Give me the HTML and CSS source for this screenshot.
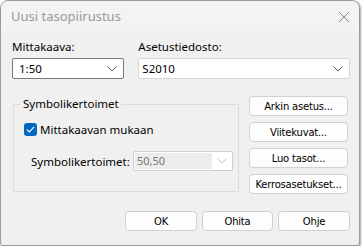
FILE: index.html
```html
<!DOCTYPE html>
<html lang="fi">
<head>
  <meta charset="utf-8">
  <title>Uusi tasopiirustus</title>
  <link rel="stylesheet" href="styles.css">
</head>
<body>
  <div class="window">
    <div class="titlebar">
      <span class="title">Uusi tasopiirustus</span>
      <svg class="close" width="12" height="12" viewBox="0 0 12 12"><path d="M1 1L11 11M11 1L1 11" stroke="#8a8a8a" stroke-width="1"/></svg>
    </div>

    <div class="content">
      <!-- Top combos -->
      <div class="top-row">
        <div class="field scale">
          <label>Mittakaava:</label>
          <div class="combo dark">
            <span>1:50</span>
            <svg class="arrow" width="10" height="6" viewBox="0 0 10 6"><path d="M0.5 0.5L5 5L9.5 0.5" fill="none" stroke="#5a5a5a"/></svg>
          </div>
        </div>
        <div class="field settings">
          <label>Asetustiedosto:</label>
          <div class="combo">
            <span>S2010</span>
            <svg class="arrow" width="10" height="6" viewBox="0 0 10 6"><path d="M0.5 0.5L5 5L9.5 0.5" fill="none" stroke="#5a5a5a"/></svg>
          </div>
        </div>
      </div>

      <!-- Group and side buttons -->
      <div class="mid-row">
        <fieldset class="group">
          <legend>Symbolikertoimet</legend>
          <div class="check-row">
            <span class="checkbox"><svg width="9" height="7" viewBox="0 0 9 7"><path d="M0.8 3.6L3.3 6L8.2 0.8" fill="none" stroke="#fff" stroke-width="1.2"/></svg></span>
            <span>Mittakaavan mukaan</span>
          </div>
          <div class="factor-row">
            <span>Symbolikertoimet:</span>
            <div class="combo disabled">
              <span class="value">50,50</span>
              <svg class="arrow" width="10" height="6" viewBox="0 0 10 6"><path d="M0.5 0.5L5 5L9.5 0.5" fill="none" stroke="#c4c4c4"/></svg>
            </div>
          </div>
        </fieldset>
        <div class="side-buttons">
          <button class="btn">Arkin asetus...</button>
          <button class="btn">Viitekuvat...</button>
          <button class="btn">Luo tasot...</button>
          <button class="btn">Kerrosasetukset...</button>
        </div>
      </div>

      <!-- Dialog buttons -->
      <div class="bottom-row">
        <button class="btn wide">OK</button>
        <button class="btn ohita">Ohita</button>
        <button class="btn wide">Ohje</button>
      </div>
    </div>
  </div>
</body>
</html>
```

FILE: styles.css
```css
body { margin: 0; background: #fff; font-family: "Noto Sans", "Open Sans", sans-serif; font-size: 11px; color: #000; }
.window { width: 358px; height: 244px; border: 1px solid #9a9a9a; border-radius: 8px 8px 3px 3px; background: #f0f0f0; box-shadow: 1px 1px 2px rgba(0,0,0,0.35); overflow: hidden; }
.titlebar { height: 30px; background: #f3f3f3; display: flex; align-items: center; justify-content: space-between; padding: 0 9px 0 10px; box-sizing: border-box; }
.title { font-size: 13px; color: #9a9a9a; }
.close { margin-top: 1px; }
.content { padding: 8px 9px 0 11px; }

.top-row { display: flex; gap: 14px; }
.field label { display: block; font-size: 11.5px; line-height: 16px; margin-bottom: 3px; }
.scale { width: 113px; }
.settings { width: 213px; }
.combo { height: 21px; box-sizing: border-box; border: 1px solid #d6d6d6; background: #fff; border-radius: 2px; display: flex; align-items: center; justify-content: space-between; padding: 0 6px 0 3px; font-size: 11.5px; }
.combo.dark { border-color: #7a7a7a; padding-left: 6px; }
.combo.disabled { width: 100px; height: 20px; border-color: #cfcfcf; padding: 0 5px 0 1px; font-size: 11px; }
.combo.disabled .value { background: #ececec; color: #777; width: 75px; height: 16px; line-height: 16px; padding-left: 2px; }

.mid-row { display: flex; margin-top: 17px; }
.group { margin: 1px 0 0 1px; padding: 0; width: 226px; height: 95px; border: 1px solid #dcdcdc; border-radius: 0; box-sizing: border-box; }
.group legend { margin-left: 7px; padding: 0 2px; line-height: 14px; font-size: 11.5px; }
.check-row { display: flex; align-items: center; gap: 3px; margin: 11px 0 0 10px; font-size: 11.5px; }
.checkbox { width: 13px; height: 13px; background: #0067c0; border-radius: 3px; display: flex; align-items: center; justify-content: center; }
.factor-row { display: flex; align-items: center; margin: 14px 0 0 17px; }
.factor-row > span { width: 102px; font-size: 11.5px; }

.side-buttons { display: flex; flex-direction: column; gap: 6px; margin-left: 10px; }
.btn { font-family: "DejaVu Sans", sans-serif; font-size: 10px; letter-spacing: -0.2px; height: 20px; width: 99px; padding: 0; background: #fdfdfd; border: 1px solid #d0d0d0; border-radius: 4px; color: #000; }
.bottom-row { display: flex; justify-content: flex-end; gap: 5px; margin-top: 17px; }
.btn.wide { width: 72px; }
.btn.ohita { width: 71px; }
```
